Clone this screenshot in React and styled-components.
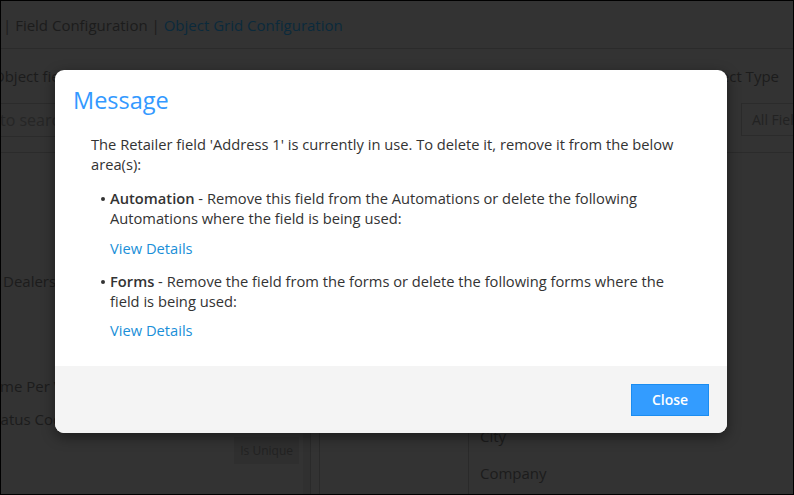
import React from 'react'
import styled, { createGlobalStyle } from 'styled-components'

const GlobalStyle = createGlobalStyle`
  html, body {
    margin: 0;
    padding: 0;
    background: #333;
  }
  body {
    font-family: 'Open Sans', 'Noto Sans', sans-serif;
  }
`

const Frame = styled.div`
  position: relative;
  width: 794px;
  height: 495px;
  box-sizing: border-box;
  border: 1px solid #000;
  background: #333;
  overflow: hidden;
  color: #1c1c1c;
`

const Header = styled.div`
  height: 47px;
  display: flex;
  align-items: center;
  padding-left: 2px;
  border-bottom: 1px solid #2b2b2b;
  font-size: 15px;
  white-space: nowrap;
`

const Crumb = styled.span`
  color: ${p => (p.active ? '#0b2a3c' : '#1c1c1c')};
`

const FilterBar = styled.div`
  display: flex;
  justify-content: space-between;
  border-bottom: 1px solid #2b2b2b;
`

const FilterGroup = styled.div`
  display: flex;
  flex-direction: column;
  width: ${p => p.width}px;
  align-items: ${p => (p.right ? 'flex-end' : 'stretch')};
`

const Label = styled.div`
  height: 54px;
  display: flex;
  align-items: center;
  font-size: 15px;
  white-space: nowrap;
  margin-left: ${p => p.shift || 0}px;
  padding-right: ${p => p.pad || 0}px;
`

const SearchBox = styled.div`
  height: 32px;
  border-top: 1px solid #2b2b2b;
  border-bottom: 1px solid #2b2b2b;
  display: flex;
  align-items: center;
  font-size: 16px;
  color: #262626;
  margin-left: -1px;
  margin-bottom: 15px;
`

const SelectBox = styled.div`
  width: 41px;
  height: 31px;
  border: 1px solid #2b2b2b;
  border-right: none;
  display: flex;
  align-items: center;
  padding-left: 10px;
  font-size: 14px;
  color: #222;
  white-space: nowrap;
  overflow: hidden;
`

const Content = styled.div`
  display: grid;
  grid-template-columns: 302px 8px 9px 149px 1fr;
  height: 341px;
`

const Column = styled.div`
  display: flex;
  flex-direction: column;
  border-right: ${p => (p.line ? '1px solid #2a2a2a' : 'none')};
  background: ${p => p.shade || 'transparent'};
`

const ListItem = styled.div`
  font-size: 15px;
  white-space: nowrap;
  margin-left: ${p => p.shift || 0}px;
  margin-top: ${p => p.top || 0}px;
  padding-left: ${p => p.pad || 0}px;
`

const Badge = styled.div`
  align-self: flex-end;
  margin-right: 4px;
  margin-top: 8px;
  padding: 5px 6px;
  background: #2f2f2f;
  font-size: 12px;
  color: #222;
`

const Modal = styled.div`
  position: absolute;
  left: 54px;
  top: 69px;
  width: 672px;
  height: 363px;
  background: #fff;
  border-radius: 9px;
  overflow: hidden;
  display: flex;
  flex-direction: column;
  box-shadow: 0 4px 14px rgba(0, 0, 0, 0.45);
`

const ModalHeader = styled.div`
  padding: 15px 18px 0;
`

const Title = styled.h2`
  margin: 0;
  font-size: 23.5px;
  line-height: 30px;
  font-weight: 400;
  color: #3399ff;
`

const ModalBody = styled.div`
  flex: 1;
  padding: 19px 36px 0;
  font-size: 14.7px;
  line-height: 20px;
  color: #333;
`

const Text = styled.p`
  margin: 0;
  white-space: nowrap;
`

const Bullets = styled.ul`
  margin: 0;
  padding-left: 19px;
  list-style: none;
`

const Bullet = styled.li`
  position: relative;
  margin-top: ${p => p.top}px;
  &::before {
    content: '';
    position: absolute;
    left: -9px;
    top: 9px;
    width: 4px;
    height: 4px;
    border-radius: 50%;
    background: #333;
  }
`

const Strong = styled.b`
  font-weight: 600;
`

const DetailsLink = styled.a`
  display: block;
  margin-top: ${p => p.top}px;
  color: #1a8fd8;
  text-decoration: none;
`

const ModalFooter = styled.div`
  height: 67px;
  background: #f4f4f4;
  display: flex;
  align-items: center;
  justify-content: flex-end;
  padding: 0 18px;
`

const Button = styled.button`
  width: 78px;
  height: 32px;
  background: #339cff;
  border: 1px solid #1a8cf0;
  color: #fff;
  font-family: inherit;
  font-size: 14px;
  font-weight: 600;
  cursor: pointer;
`

export default function App() {
  return (
    <>
      <GlobalStyle />
      <Frame>
        <Header>
          <Crumb>| Field Configuration | </Crumb>
          <Crumb active>&nbsp;Object Grid Configuration</Crumb>
        </Header>
        <FilterBar>
          <FilterGroup width={300}>
            <Label shift={-8}>Object fields</Label>
            <SearchBox>to search</SearchBox>
          </FilterGroup>
          <FilterGroup width={100} right>
            <Label pad={14}>Object Type</Label>
            <SelectBox>All Fields</SelectBox>
          </FilterGroup>
        </FilterBar>
        <Content>
          <Column>
            <ListItem top={118} pad={2}>Dealers</ListItem>
            <ListItem top={85} shift={-13}>Time Per Visit</ListItem>
            <ListItem top={13} shift={-14}>Status Code</ListItem>
            <Badge>Is Unique</Badge>
          </Column>
          <Column line shade="#303030" />
          <Column line />
          <Column line />
          <Column>
            <ListItem top={273} pad={11}>City</ListItem>
            <ListItem top={17} pad={11}>Company</ListItem>
          </Column>
        </Content>
        <Modal>
          <ModalHeader>
            <Title>Message</Title>
          </ModalHeader>
          <ModalBody>
            <Text>
              The Retailer field 'Address 1' is currently in use. To delete it, remove it from the below
              <br />
              area(s):
            </Text>
            <Bullets>
              <Bullet top={14}>
                <Text>
                  <Strong>Automation</Strong> - Remove this field from the Automations or delete the following
                  <br />
                  Automations where the field is being used:
                </Text>
                <DetailsLink href="#" top={10}>View Details</DetailsLink>
              </Bullet>
              <Bullet top={13}>
                <Text>
                  <Strong>Forms</Strong> - Remove the field from the forms or delete the following forms where the
                  <br />
                  field is being used:
                </Text>
                <DetailsLink href="#" top={9}>View Details</DetailsLink>
              </Bullet>
            </Bullets>
          </ModalBody>
          <ModalFooter>
            <Button>Close</Button>
          </ModalFooter>
        </Modal>
      </Frame>
    </>
  )
}
